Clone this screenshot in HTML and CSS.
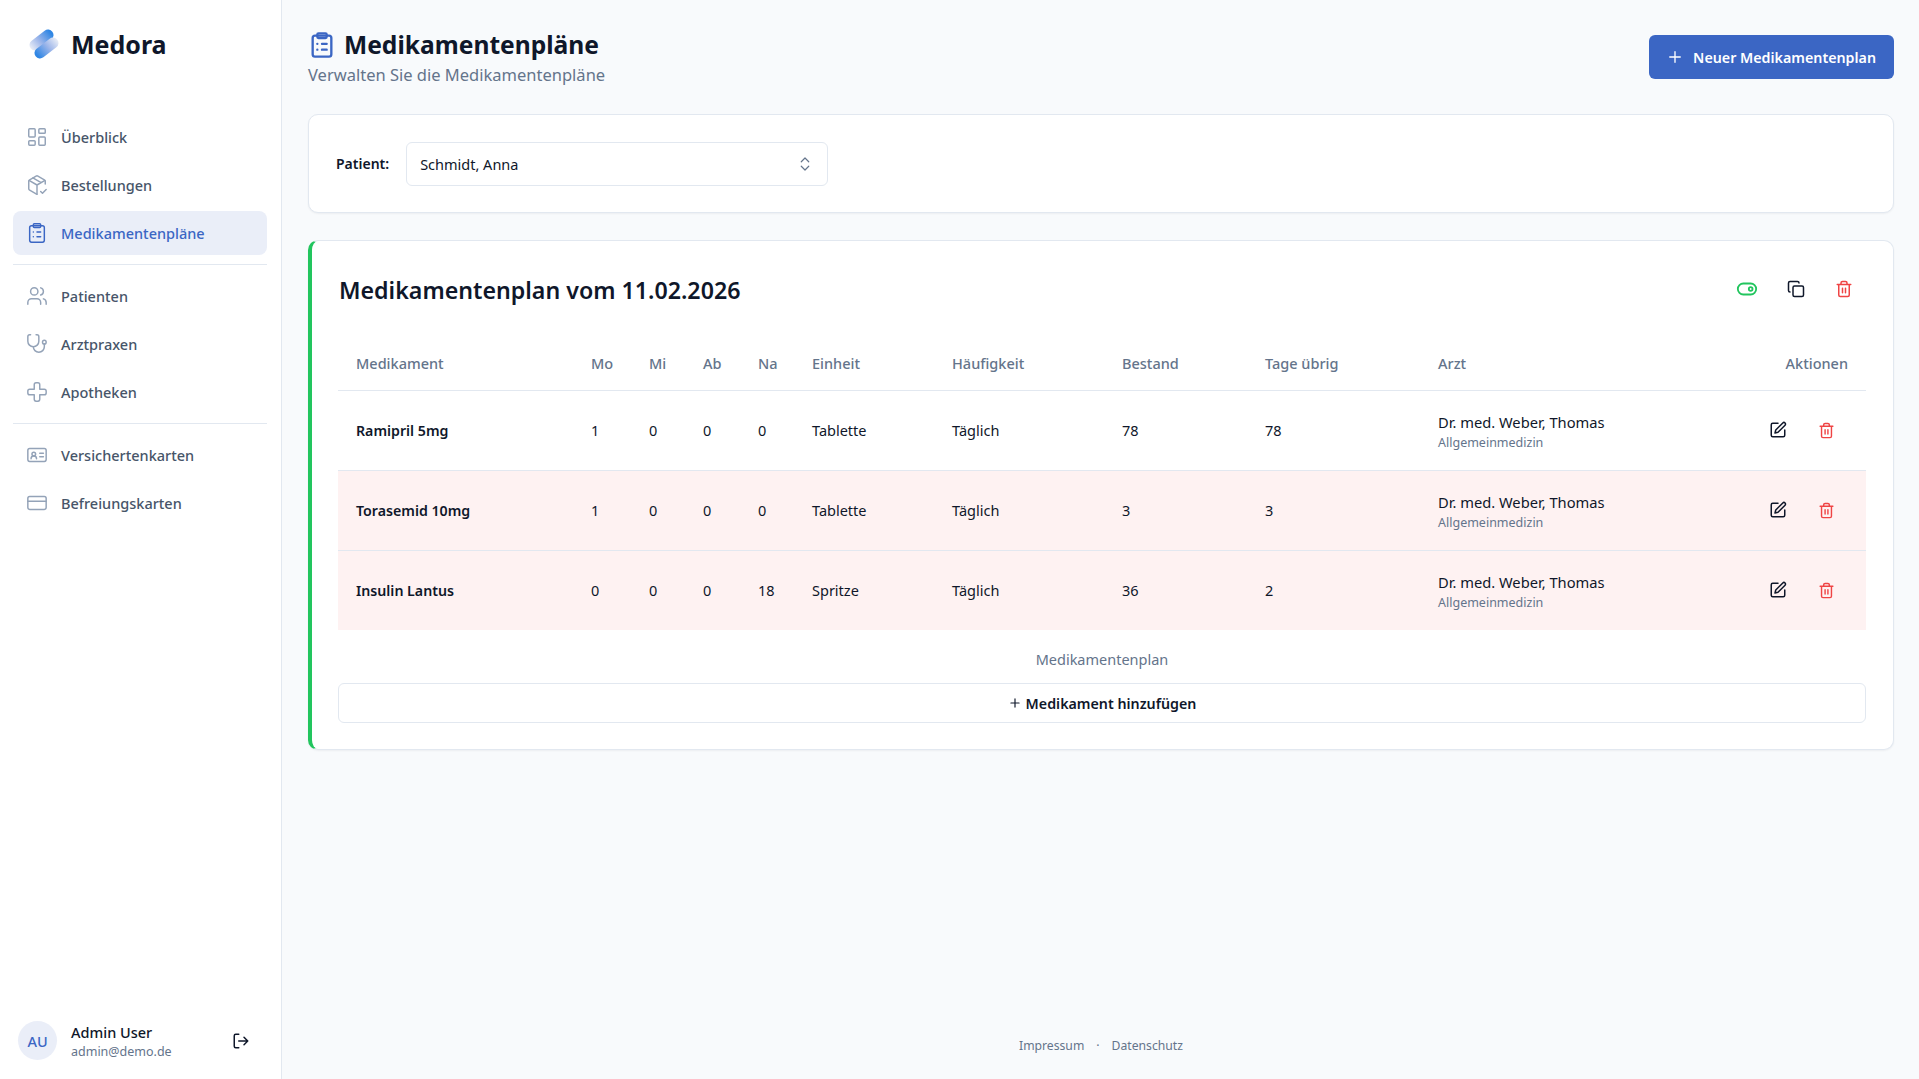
FILE: index.html
```html
<!DOCTYPE html>
<html lang="de">
<head>
    <meta charset="UTF-8">
    <meta name="viewport" content="width=device-width, initial-scale=1.0">
    <title>Medora - Medikamentenpläne</title>
    <link rel="stylesheet" href="styles.css">
</head>
<body>
    <svg class="sprite" width="0" height="0">
        <symbol id="i-clipboard" viewBox="0 0 24 24"><rect x="4" y="4" width="16" height="18" rx="2"/><rect x="8" y="2" width="8" height="4" rx="1"/><path d="M12 11h4M12 16h4M8 11h.01M8 16h.01"/></symbol>
        <symbol id="i-trash" viewBox="0 0 24 24"><path d="M3 6h18M19 6v14a2 2 0 0 1-2 2H7a2 2 0 0 1-2-2V6M8 6V4a2 2 0 0 1 2-2h4a2 2 0 0 1 2 2v2M10 11v6M14 11v6"/></symbol>
        <symbol id="i-edit" viewBox="0 0 24 24"><path d="M12 3H5a2 2 0 0 0-2 2v14a2 2 0 0 0 2 2h14a2 2 0 0 0 2-2v-7"/><path d="M18.4 2.600a2.100 2.100 0 1 1 3 3L12 15l-4 1 1-4z"/></symbol>
    </svg>
    <div class="app">
        <aside class="sidebar">
            <div class="brand">
                <svg class="brand-logo" viewBox="0 0 32 32">
                    <defs>
                        <linearGradient id="pill-a" gradientUnits="userSpaceOnUse" x1="22" y1="4" x2="3" y2="20"><stop offset="0" stop-color="#2f86e4"/><stop offset="0.55" stop-color="#9db6ea"/><stop offset="1" stop-color="#e6ebf6"/></linearGradient>
                        <linearGradient id="pill-b" gradientUnits="userSpaceOnUse" x1="10" y1="28" x2="29" y2="12"><stop offset="0" stop-color="#2f86e4"/><stop offset="0.55" stop-color="#9db6ea"/><stop offset="1" stop-color="#e6ebf6"/></linearGradient>
                    </defs>
                    <path class="pill" d="M20 7 7 17" stroke="url(#pill-a)"/>
                    <path class="pill" d="M12 25 25 15" stroke="url(#pill-b)"/>
                </svg>
                <span class="brand-name">Medora</span>
            </div>
            <nav class="nav">
                <a class="nav-item"><svg viewBox="0 0 24 24"><rect x="3" y="3" width="7" height="9" rx="1"/><rect x="14" y="3" width="7" height="5" rx="1"/><rect x="14" y="12" width="7" height="9" rx="1"/><rect x="3" y="16" width="7" height="5" rx="1"/></svg>Überblick</a>
                <a class="nav-item"><svg viewBox="0 0 24 24"><path d="M21 11V8a2 2 0 0 0-1-1.700l-7-4a2 2 0 0 0-2 0l-7 4A2 2 0 0 0 3 8v8a2 2 0 0 0 1 1.700l7 4a2 2 0 0 0 1 .3"/><path d="M3.300 7 12 12l8.700-5M12 22V12M7.500 4.300l9 5.100M16 19l2 2 4-4"/></svg>Bestellungen</a>
                <a class="nav-item active"><svg><use href="#i-clipboard"/></svg>Medikamentenpläne</a>
                <div class="nav-divider"></div>
                <a class="nav-item"><svg viewBox="0 0 24 24"><path d="M16 21v-2a4 4 0 0 0-4-4H6a4 4 0 0 0-4 4v2"/><circle cx="9" cy="7" r="4"/><path d="M22 21v-2a4 4 0 0 0-3-3.870M16 3.130a4 4 0 0 1 0 7.750"/></svg>Patienten</a>
                <a class="nav-item"><svg viewBox="0 0 24 24"><path d="M5 2H4a2 2 0 0 0-2 2v5a6 6 0 0 0 12 0V4a2 2 0 0 0-2-2h-1"/><path d="M8 15a6 6 0 0 0 12 0v-3"/><circle cx="20" cy="10" r="2"/></svg>Arztpraxen</a>
                <a class="nav-item"><svg viewBox="0 0 24 24"><path d="M11 2a2 2 0 0 0-2 2v5H4a2 2 0 0 0-2 2v2a2 2 0 0 0 2 2h5v5a2 2 0 0 0 2 2h2a2 2 0 0 0 2-2v-5h5a2 2 0 0 0 2-2v-2a2 2 0 0 0-2-2h-5V4a2 2 0 0 0-2-2z"/></svg>Apotheken</a>
                <div class="nav-divider"></div>
                <a class="nav-item"><svg viewBox="0 0 24 24"><rect x="2" y="5" width="20" height="14" rx="2"/><circle cx="8.500" cy="11" r="2"/><path d="M5.500 16a3 3 0 0 1 6 0M15 10h4M15 14h4"/></svg>Versichertenkarten</a>
                <a class="nav-item"><svg viewBox="0 0 24 24"><rect x="2" y="5" width="20" height="14" rx="2"/><path d="M2 10h20"/></svg>Befreiungskarten</a>
            </nav>
            <div class="user">
                <div class="avatar">AU</div>
                <div class="user-info">
                    <div class="user-name">Admin User</div>
                    <div class="user-mail">admin@demo.de</div>
                </div>
                <svg class="logout" viewBox="0 0 24 24"><path d="M9 21H5a2 2 0 0 1-2-2V5a2 2 0 0 1 2-2h4M16 17l5-5-5-5M21 12H9"/></svg>
            </div>
        </aside>
        <main class="main">
            <header class="page-head">
                <div>
                    <h1><svg><use href="#i-clipboard"/></svg>Medikamentenpläne</h1>
                    <p class="subtitle">Verwalten Sie die Medikamentenpläne</p>
                </div>
                <button class="btn-primary"><svg viewBox="0 0 24 24"><path d="M5 12h14M12 5v14"/></svg>Neuer Medikamentenplan</button>
            </header>

            <section class="card patient-card">
                <label class="patient-label">Patient:</label>
                <div class="select">
                    <span>Schmidt, Anna</span>
                    <svg viewBox="0 0 24 24"><path d="m7 15 5 5 5-5M7 9l5-5 5 5"/></svg>
                </div>
            </section>

            <section class="card plan-card">
                <div class="plan-head">
                    <h2>Medikamentenplan vom 11.02.2026</h2>
                    <div class="plan-actions">
                        <svg class="toggle green" viewBox="0 0 24 24"><rect x="2" y="6" width="20" height="12" rx="6"/><circle cx="16" cy="12" r="2"/></svg>
                        <svg class="copy dark" viewBox="0 0 24 24"><rect x="8" y="8" width="14" height="14" rx="2"/><path d="M4 16c-1.100 0-2-.9-2-2V4c0-1.100.9-2 2-2h10c1.100 0 2 .9 2 2"/></svg>
                        <svg class="bin red"><use href="#i-trash"/></svg>
                    </div>
                </div>
                <table class="med-table">
                    <colgroup>
                        <col class="c-name"><col class="c-mo"><col class="c-mi"><col class="c-ab"><col class="c-na"><col class="c-unit"><col class="c-freq"><col class="c-stock"><col class="c-days"><col class="c-doc"><col>
                    </colgroup>
                    <thead>
                        <tr><th>Medikament</th><th>Mo</th><th>Mi</th><th>Ab</th><th>Na</th><th>Einheit</th><th>Häufigkeit</th><th>Bestand</th><th>Tage übrig</th><th>Arzt</th><th class="right">Aktionen</th></tr>
                    </thead>
                    <tbody>
                        <tr>
                            <td class="med">Ramipril 5mg</td><td>1</td><td>0</td><td>0</td><td>0</td><td>Tablette</td><td>Täglich</td><td>78</td><td>78</td>
                            <td><div class="doc">Dr. med. Weber, Thomas</div><div class="spec">Allgemeinmedizin</div></td>
                            <td><div class="row-actions"><svg class="edit dark"><use href="#i-edit"/></svg><svg class="bin red"><use href="#i-trash"/></svg></div></td>
                        </tr>
                        <tr class="low">
                            <td class="med">Torasemid 10mg</td><td>1</td><td>0</td><td>0</td><td>0</td><td>Tablette</td><td>Täglich</td><td>3</td><td>3</td>
                            <td><div class="doc">Dr. med. Weber, Thomas</div><div class="spec">Allgemeinmedizin</div></td>
                            <td><div class="row-actions"><svg class="edit dark"><use href="#i-edit"/></svg><svg class="bin red"><use href="#i-trash"/></svg></div></td>
                        </tr>
                        <tr class="low">
                            <td class="med">Insulin Lantus</td><td>0</td><td>0</td><td>0</td><td>18</td><td>Spritze</td><td>Täglich</td><td>36</td><td>2</td>
                            <td><div class="doc">Dr. med. Weber, Thomas</div><div class="spec">Allgemeinmedizin</div></td>
                            <td><div class="row-actions"><svg class="edit dark"><use href="#i-edit"/></svg><svg class="bin red"><use href="#i-trash"/></svg></div></td>
                        </tr>
                    </tbody>
                </table>
                <p class="table-caption">Medikamentenplan</p>
                <button class="btn-add"><svg viewBox="0 0 24 24"><path d="M5 12h14M12 5v14"/></svg>Medikament hinzufügen</button>
            </section>

            <footer class="footer">
                <a>Impressum</a><span>·</span><a>Datenschutz</a>
            </footer>
        </main>
    </div>
</body>
</html>
```

FILE: styles.css
```css
* {
    box-sizing: border-box;
}
body {
    margin: 0;
    font-family: "Noto Sans", sans-serif;
    font-size: 14px;
    color: #0f172a;
    background: #f8fafc;
}
svg {
    fill: none;
    stroke: currentColor;
    stroke-width: 2;
    stroke-linecap: round;
    stroke-linejoin: round;
    flex-shrink: 0;
}
symbol {
    overflow: visible;
}
.sprite {
    position: absolute;
}
.app {
    display: flex;
    height: 100vh;
}

/* sidebar */
.sidebar {
    width: 282px;
    flex-shrink: 0;
    display: flex;
    flex-direction: column;
    background: #fff;
    border-right: 1px solid #e2e8f0;
}
.brand {
    display: flex;
    align-items: center;
    gap: 11px;
    height: 88px;
    padding-left: 28px;
}
.brand-logo {
    width: 32px;
    height: 32px;
}
.pill {
    stroke-width: 11;
}
.brand-name {
    font-size: 25px;
    font-weight: 700;
}
.nav {
    display: flex;
    flex-direction: column;
    gap: 4px;
    padding: 27px 14px 0 13px;
}
.nav-item {
    display: flex;
    align-items: center;
    gap: 13px;
    height: 44px;
    padding: 0 13px;
    border-radius: 8px;
    font-size: 14.5px;
    font-weight: 500;
    color: #475569;
}
.nav-item svg {
    width: 22px;
    height: 22px;
    stroke-width: 1.6;
    color: #94a3b8;
}
.nav-item.active {
    background: #eaeef8;
    color: #3b66c4;
}
.nav-item.active svg {
    color: #3b66c4;
}
.nav-divider {
    height: 1px;
    margin: 5px 0;
    background: #e2e8f0;
}
.user {
    display: flex;
    align-items: center;
    margin-top: auto;
    padding: 0 31px 17px 18px;
}
.avatar {
    width: 39px;
    height: 39px;
    border-radius: 50%;
    background: #eaeef8;
    color: #3b66c4;
    display: flex;
    align-items: center;
    justify-content: center;
    font-size: 14.5px;
    font-weight: 500;
}
.user-info {
    margin: 3px 0 0 14px;
    flex: 1;
}
.user-name {
    font-size: 14.5px;
    font-weight: 500;
    line-height: 20px;
}
.user-mail {
    font-size: 12.5px;
    color: #64748b;
    line-height: 20px;
}
.logout {
    width: 18px;
    height: 18px;
}

/* main */
.main {
    flex: 1;
    display: flex;
    flex-direction: column;
    padding: 0 25px 0 26px;
    min-width: 0;
}
.page-head {
    display: flex;
    justify-content: space-between;
    align-items: flex-start;
    padding-top: 28px;
    height: 114px;
}
h1 {
    display: flex;
    align-items: center;
    gap: 8px;
    margin: 0;
    font-size: 24.6px;
    font-weight: 700;
    line-height: 34px;
}
h1 svg {
    width: 28px;
    height: 28px;
    stroke-width: 2;
    color: #3b66c4;
}
.subtitle {
    margin: 1px 0 0;
    font-size: 16.5px;
    line-height: 24px;
    color: #64748b;
}
.btn-primary {
    display: flex;
    align-items: center;
    gap: 9px;
    height: 44px;
    margin-top: 7px;
    padding: 0 18px 0 17px;
    border: none;
    border-radius: 6px;
    background: #3b66c4;
    color: #fff;
    font: 600 14.25px "Noto Sans", sans-serif;
}
.btn-primary svg {
    width: 18px;
    height: 18px;
    stroke-width: 1.8;
}
.card {
    background: #fff;
    border: 1px solid #e2e8f0;
    border-radius: 10px;
    box-shadow: 0 1px 2px rgba(15, 23, 42, 0.05);
}
.patient-card {
    display: flex;
    align-items: center;
    gap: 17px;
    height: 99px;
    padding: 0 27px;
}
.patient-label {
    font-weight: 600;
    font-size: 14px;
}
.select {
    width: 422px;
    height: 44px;
    display: flex;
    align-items: center;
    justify-content: space-between;
    padding: 0 13px;
    border: 1px solid #e2e8f0;
    border-radius: 6px;
    font-size: 14.5px;
}
.select svg {
    width: 18px;
    height: 18px;
    color: #64748b;
    stroke-width: 1.6;
}
.plan-card {
    margin-top: 27px;
    height: 510px;
    padding: 0 27px 0 26px;
    border-left: 4px solid #22c55e;
}
.plan-head {
    display: flex;
    justify-content: space-between;
    align-items: center;
    height: 98px;
}
h2 {
    margin: 0 0 0 1px;
    font-size: 23.2px;
    font-weight: 600;
}
.plan-actions {
    display: flex;
    align-items: center;
    margin-bottom: 2px;
    padding-right: 13px;
}
.plan-actions .toggle {
    width: 22px;
    height: 22px;
    margin-right: 29px;
}
.plan-actions .copy {
    width: 18px;
    height: 18px;
    margin-right: 30px;
}
.plan-actions .bin {
    width: 18px;
    height: 18px;
}
.green {
    color: #22c55e;
}
.dark {
    color: #0f172a;
}
.red {
    color: #ef4444;
}

/* table */
.med-table {
    width: 100%;
    border-collapse: collapse;
    table-layout: fixed;
}
.c-name { width: 235px; }
.c-mo { width: 58px; }
.c-mi { width: 54px; }
.c-ab { width: 55px; }
.c-na { width: 54px; }
.c-unit { width: 140px; }
.c-freq { width: 170px; }
.c-stock { width: 143px; }
.c-days { width: 173px; }
.c-doc { width: 300px; }
.med-table th {
    height: 51px;
    padding: 0 18px 2px;
    text-align: left;
    font-size: 14.5px;
    font-weight: 500;
    color: #64748b;
    border-bottom: 1px solid #e2e8f0;
}
.med-table th.right {
    text-align: right;
}
.med-table td {
    height: 80px;
    padding: 0 18px;
    font-size: 14.5px;
    border-bottom: 1px solid #e2e8f0;
}
.med-table tr:last-child td {
    border-bottom: none;
}
.med-table td.med {
    font-size: 14.2px;
    font-weight: 600;
}
.low td {
    background: #fef2f2;
}
.doc {
    margin: 3px 0 2px;
    font-size: 14.7px;
    line-height: 20px;
}
.spec {
    font-size: 12.5px;
    line-height: 18px;
    color: #64748b;
}
.row-actions {
    display: flex;
    align-items: center;
    justify-content: flex-end;
    gap: 31px;
    padding-right: 13px;
}
.row-actions .edit {
    width: 18px;
    height: 18px;
}
.row-actions .bin {
    width: 17px;
    height: 17px;
}
.table-caption {
    margin: 0;
    height: 53px;
    line-height: 58px;
    text-align: center;
    font-size: 14.5px;
    color: #64748b;
}
.btn-add {
    width: 100%;
    height: 40px;
    display: flex;
    align-items: center;
    justify-content: center;
    gap: 4px;
    background: #fff;
    border: 1px solid #e2e8f0;
    border-radius: 6px;
    color: #0f172a;
    font: 600 14.25px "Noto Sans", sans-serif;
}
.btn-add svg {
    width: 14px;
    height: 14px;
}
.footer {
    margin-top: auto;
    display: flex;
    justify-content: center;
    gap: 12px;
    padding-bottom: 24px;
    font-size: 12.2px;
    line-height: 18px;
    color: #64748b;
}
```
